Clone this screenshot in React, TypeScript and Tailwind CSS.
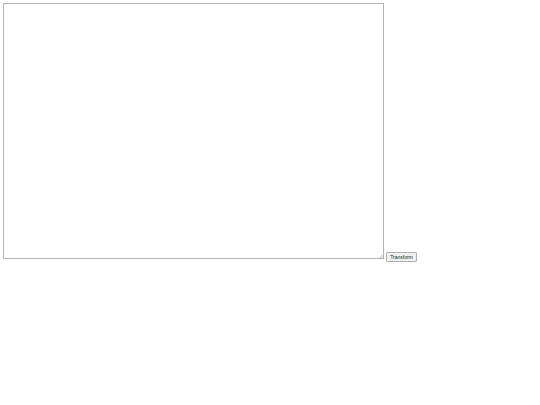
export default function App() {
  return (
    <div className="flex items-end p-[3px] bg-white" style={{ fontFamily: '"Liberation Sans", Arial, sans-serif' }}>
      <div className="relative">
        <textarea className="block w-[381px] h-[256px] border border-[#b3b3b3] resize-none outline-none bg-white" />
        <svg className="absolute right-[1px] bottom-[1px]" width="4" height="4" viewBox="0 0 4 4">
          <line x1="4" y1="0.5" x2="0.5" y2="4" stroke="#9a9a9a" strokeWidth="0.6" />
          <line x1="4" y1="2.3" x2="2.3" y2="4" stroke="#9a9a9a" strokeWidth="0.6" />
        </svg>
      </div>
      <button className="ml-[2px] mb-[-3px] h-[10px] w-[31px] px-0 text-[5px] leading-[8px] text-[#222] bg-[#f0f0f0] border border-[#b0b0b0] rounded-[1px]">
        Transform
      </button>
    </div>
  );
}
